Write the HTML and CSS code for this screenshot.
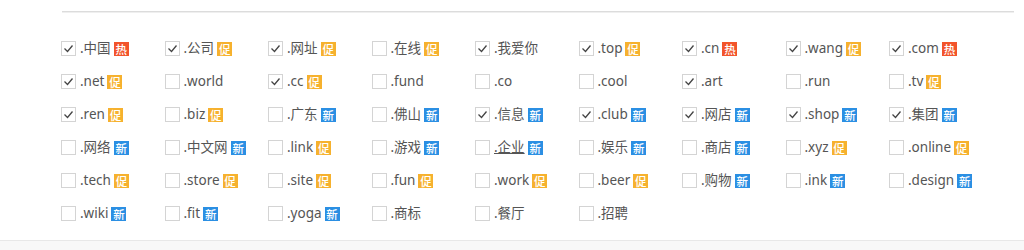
FILE: index.html
```html
<!DOCTYPE html>
<html lang="zh">
<head>
<meta charset="utf-8">
<link rel="stylesheet" href="styles.css">
</head>
<body>
<div class="page">
  <div class="topline"></div>
  <div class="grid" id="grid"></div>
</div>
<div class="footer"></div>
<script src="app.js"></script>
</body>
</html>
```
FILE: styles.css
```css
html, body { margin: 0; padding: 0; background: #fff; }
body { font-family: "Noto Sans", "Noto Sans CJK SC", sans-serif; color: #555; }
.page { height: 240px; padding-left: 61px; box-sizing: border-box; padding-top: 11px; }
.topline { margin-left: 1px; width: 952px; height: 1px; background: #dcdcdc; border-bottom: 1px solid #efefef; }
.grid { display: grid; grid-template-columns: repeat(9, 103.5px); grid-auto-rows: 33px; margin-top: 19px; }
.item { display: flex; align-items: center; font-size: 13.5px; white-space: nowrap; }
.box { width: 13px; height: 13px; border: 1px solid #d4d4d4; background: #fff; margin-right: 4px; flex: none; display: flex; }
.box svg { width: 13px; height: 13px; }
.name { line-height: 15px; }
.name.u { text-decoration: underline; }
.badge { margin-left: 3px; width: 15px; height: 14px; font-size: 11.5px; line-height: 14px; color: #fff; text-align: center; font-family: "Noto Sans CJK SC", sans-serif; font-weight: 500; }
.hot { background: #f2542b; }
.promo { background: #f6b12e; }
.new { background: #2b8fe3; }
.footer { height: 9px; border-top: 1px solid #e8e8e8; background: #f8f8f8; }
```
FILE: app.js
```js
var data = [
 ["中国","hot",1],["公司","promo",1],["网址","promo",1],["在线","promo",0],["我爱你","",1],["top","promo",1],["cn","hot",1],["wang","promo",1],["com","hot",1],
 ["net","promo",1],["world","",0],["cc","promo",1],["fund","",0],["co","",0],["cool","",0],["art","",1],["run","",0],["tv","promo",0],
 ["ren","promo",1],["biz","promo",0],["广东","new",0],["佛山","new",0],["信息","new",1],["club","new",1],["网店","new",1],["shop","new",1],["集团","new",1],
 ["网络","new",0],["中文网","new",0],["link","promo",0],["游戏","new",0],["企业","new",0,1],["娱乐","new",0],["商店","new",0],["xyz","promo",0],["online","promo",0],
 ["tech","promo",0],["store","promo",0],["site","promo",0],["fun","promo",0],["work","promo",0],["beer","promo",0],["购物","new",0],["ink","new",0],["design","new",0],
 ["wiki","new",0],["fit","new",0],["yoga","new",0],["商标","",0],["餐厅","",0],["招聘","",0]
];
var labels = {hot:"热", promo:"促", new:"新"};
var g = document.getElementById("grid");
data.forEach(function(d){
  var el = document.createElement("div");
  el.className = "item";
  var box = '<span class="box">' + (d[2] ? '<svg viewBox="0 0 13 13"><polyline points="2.5,6.5 5.5,9.5 10.5,3.5" fill="none" stroke="#444" stroke-width="1.3"/></svg>' : '') + '</span>';
  var name = '<span class="name' + (d[3] ? ' u' : '') + '">.' + d[0] + '</span>';
  var badge = d[1] ? '<span class="badge ' + d[1] + '">' + labels[d[1]] + '</span>' : '';
  el.innerHTML = box + name + badge;
  g.appendChild(el);
});
```
